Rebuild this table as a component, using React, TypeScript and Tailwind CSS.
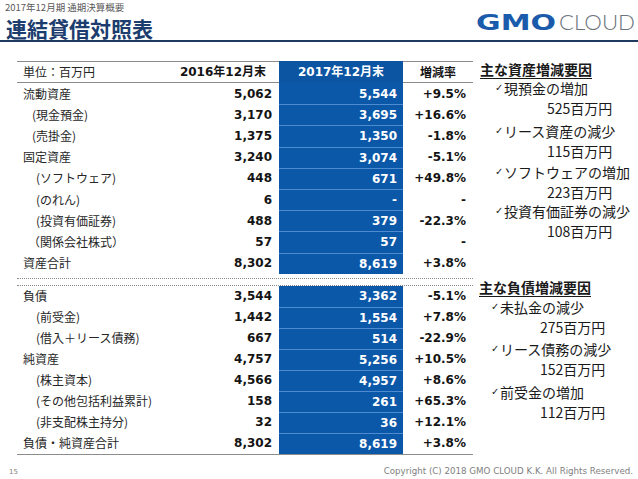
import React from "react";

type Row = { label: string; indent: string; a: string; b: string; r: string };

const assets: Row[] = [
  { label: "流動資産", indent: "pl-[6px]", a: "5,062", b: "5,544", r: "+9.5%" },
  { label: "(現金預金)", indent: "pl-[15px]", a: "3,170", b: "3,695", r: "+16.6%" },
  { label: "(売掛金)", indent: "pl-[15px]", a: "1,375", b: "1,350", r: "-1.8%" },
  { label: "固定資産", indent: "pl-[6px]", a: "3,240", b: "3,074", r: "-5.1%" },
  { label: "(ソフトウェア)", indent: "pl-[19px]", a: "448", b: "671", r: "+49.8%" },
  { label: "(のれん)", indent: "pl-[19px]", a: "6", b: "-", r: "-" },
  { label: "(投資有価証券)", indent: "pl-[19px]", a: "488", b: "379", r: "-22.3%" },
  { label: "（関係会社株式）", indent: "pl-[11px]", a: "57", b: "57", r: "-" },
  { label: "資産合計", indent: "pl-[6px]", a: "8,302", b: "8,619", r: "+3.8%" },
];

const liabilities: Row[] = [
  { label: "負債", indent: "pl-[6px]", a: "3,544", b: "3,362", r: "-5.1%" },
  { label: "(前受金)", indent: "pl-[19px]", a: "1,442", b: "1,554", r: "+7.8%" },
  { label: "(借入＋リース債務)", indent: "pl-[19px]", a: "667", b: "514", r: "-22.9%" },
  { label: "純資産", indent: "pl-[6px]", a: "4,757", b: "5,256", r: "+10.5%" },
  { label: "(株主資本)", indent: "pl-[19px]", a: "4,566", b: "4,957", r: "+8.6%" },
  { label: "(その他包括利益累計)", indent: "pl-[19px]", a: "158", b: "261", r: "+65.3%" },
  { label: "(非支配株主持分)", indent: "pl-[19px]", a: "32", b: "36", r: "+12.1%" },
  { label: "負債・純資産合計", indent: "pl-[6px]", a: "8,302", b: "8,619", r: "+3.8%" },
];

const numFont = "font-['DejaVu_Sans','Noto_Sans_CJK_JP',sans-serif] font-bold text-[12px]";
const jpFont = "font-['Noto_Sans_CJK_JP',sans-serif]";

function TableRow({ row, first, height }: { row: Row; first: boolean; height: string }) {
  return (
    <div className={`flex ${height}`}>
      <div className={`w-[160px] flex items-center text-[12px] text-[#262626] ${jpFont} ${row.indent}`}>
        {row.label}
      </div>
      <div className={`w-[102px] flex items-center justify-end pr-[7px] text-[#141414] ${numFont}`}>{row.a}</div>
      <div
        className={`w-[124px] flex items-center justify-end pr-[6px] bg-[#0c58a8] text-white ${numFont} ${
          first ? "" : "border-t border-[#4f8bd1]"
        }`}
      >
        {row.b}
      </div>
      <div className={`w-[70px] flex items-center justify-end pr-[7px] text-[#141414] ${numFont}`}>{row.r}</div>
    </div>
  );
}

function Item({ text, amount, gap, amountIndent }: { text: string; amount: string; gap: string; amountIndent: string }) {
  return (
    <div className={gap}>
      <div className="flex items-center h-[20px] leading-[20px]">
        <span className="font-['DejaVu_Sans',sans-serif] text-[10px] w-[9px] shrink-0 overflow-hidden">✓</span>
        <span>{text}</span>
      </div>
      <div className={`h-[20px] leading-[20px] ${amountIndent}`}>{amount}</div>
    </div>
  );
}

export default function App() {
  return (
    <div className={`w-[638px] h-[479px] bg-white flex flex-col overflow-hidden ${jpFont}`}>
      <header className="h-[42px] shrink-0 flex justify-between border-b-2 border-[#1f3a5f]">
        <div className="pl-[5px]">
          <div className="text-[9.5px] leading-[14px] text-[#595959]">2017年12月期 通期決算概要</div>
          <h1 className="mt-[2px] text-[21px] leading-[24px] font-bold text-[#1c3d6e] pl-px">連結貸借対照表</h1>
        </div>
        <svg width="162" height="28" viewBox="0 0 162 28" overflow="visible" className="mt-[5px] mr-[2px]">
          <text
            x="2"
            y="25"
            textLength="80"
            lengthAdjust="spacingAndGlyphs"
            fontFamily="DejaVu Sans"
            fontWeight="900"
            fontSize="20.5"
            fill="#1a5cab"
          >
            GMO
          </text>
          <text
            x="85"
            y="25"
            textLength="76"
            lengthAdjust="spacingAndGlyphs"
            fontFamily="Lato, 'Open Sans', sans-serif"
            fontWeight="300"
            fontSize="21"
            fill="#6b747d"
          >
            CLOUD
          </text>
        </svg>
      </header>

      <div className="flex pt-[19px] pl-[17px]">
        <div className="w-[456px]">
          <div className="flex h-[22px]">
            <div className="w-[262px] flex items-center justify-between border-y border-[#8c8c8c] pl-[6px] pr-[13px]">
              <span className="text-[12px] text-[#262626]">単位：百万円</span>
              <span className={`${numFont} text-[#141414]`}>2016年12月末</span>
            </div>
            <div className={`w-[124px] flex items-center justify-center bg-[#0b55a3] text-white ${numFont}`}>
              2017年12月末
            </div>
            <div className="w-[70px] flex items-center justify-center border-y border-[#8c8c8c] text-[12px] font-bold text-[#141414]">
              増減率
            </div>
          </div>

          {assets.map((row, i) => (
            <TableRow key={row.label} row={row} first={i === 0} height="h-[21.2px]" />
          ))}

          <div className="h-[4px]" />
          <div className="h-[7px] border-t border-dotted border-[#8a8a8a]" />
          <div className="border-t border-dotted border-[#8a8a8a]" />

          <div className="border-b border-[#8c8c8c]">
            {liabilities.map((row, i) => (
              <TableRow key={row.label} row={row} first={i === 0} height="h-[21px]" />
            ))}
          </div>
        </div>

        <div className="ml-[7px] w-[158px] text-[14px] text-[#1a1a1a]">
          <div className="h-[17px] leading-[17px] font-bold underline decoration-1 underline-offset-[3px]">
            主な資産増減要因
          </div>
          <div className="pl-[15px]">
            <Item text="現預金の増加" amount="525百万円" gap="mt-0" amountIndent="pl-[52px]" />
            <Item text="リース資産の減少" amount="115百万円" gap="mt-[3px]" amountIndent="pl-[52px]" />
            <Item text="ソフトウェアの増加" amount="223百万円" gap="mt-[1px]" amountIndent="pl-[52px]" />
            <Item text="投資有価証券の減少" amount="108百万円" gap="-mt-px" amountIndent="pl-[52px]" />
          </div>

          <div className="mt-[37px] -ml-px h-[18px] leading-[18px] font-bold underline decoration-1 underline-offset-[3px]">
            主な負債増減要因
          </div>
          <div className="pl-[11px]">
            <Item text="未払金の減少" amount="275百万円" gap="mt-[1px]" amountIndent="pl-[49px]" />
            <Item text="リース債務の減少" amount="152百万円" gap="mt-[2px]" amountIndent="pl-[49px]" />
            <Item text="前受金の増加" amount="112百万円" gap="mt-[3px]" amountIndent="pl-[49px]" />
          </div>
        </div>
      </div>

      <footer className="mt-auto h-[14px] flex items-center justify-between pl-[9px] pr-[5px] text-[#808080]">
        <span className="font-['DejaVu_Sans',sans-serif] text-[7px]">15</span>
        <span className="font-['DejaVu_Sans',sans-serif] text-[8.7px]">
          Copyright (C) 2018 GMO CLOUD K.K. All Rights Reserved.
        </span>
      </footer>
    </div>
  );
}
